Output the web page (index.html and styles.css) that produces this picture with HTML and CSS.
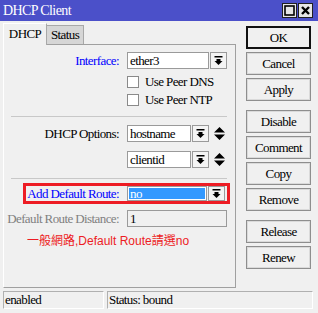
FILE: index.html
```html
<!DOCTYPE html>
<html lang="zh-TW">
<head>
    <meta charset="UTF-8">
    <title>DHCP Client</title>
    <link rel="stylesheet" href="styles.css">
</head>
<body>
    <div class="window">
        <div class="titlebar">
            <span class="title">DHCP Client</span>
            <div class="title-btns">
                <span class="tbtn">
                    <svg width="11" height="11" viewBox="0 0 11 11"><rect x="1" y="1" width="9" height="9" fill="none" stroke="#000" stroke-width="1.6"/></svg>
                </span>
                <span class="tbtn">
                    <svg width="11" height="11" viewBox="0 0 11 11"><path d="M2 2 L9 9 M9 2 L2 9" stroke="#000" stroke-width="2.4"/></svg>
                </span>
            </div>
        </div>

        <div class="main">
            <div class="left">
                <div class="tabs">
                    <div class="tab active">DHCP</div>
                    <div class="tab">Status</div>
                </div>
                <div class="panel">
                    <div class="row row-iface">
                        <label class="lbl blue">Interface:</label>
                        <div class="field w-iface">ether3</div>
                        <span class="drop"><svg width="9" height="9" viewBox="0 0 9 9"><rect x="0.5" y="0" width="8" height="1.5" fill="#000"/><path d="M2.5 3 H6.5 V5 H8.5 L4.5 9 L0.5 5 H2.5 Z" fill="#000"/></svg></span>
                    </div>
                    <div class="row check-row first">
                        <span class="check"></span><span class="ctext">Use Peer DNS</span>
                    </div>
                    <div class="row check-row">
                        <span class="check"></span><span class="ctext">Use Peer NTP</span>
                    </div>

                    <div class="sep"></div>

                    <div class="row row-opt1">
                        <label class="lbl">DHCP Options:</label>
                        <div class="field w-opt">hostname</div>
                        <span class="drop"><svg width="9" height="9" viewBox="0 0 9 9"><rect x="0.5" y="0" width="8" height="1.5" fill="#000"/><path d="M2.5 3 H6.5 V5 H8.5 L4.5 9 L0.5 5 H2.5 Z" fill="#000"/></svg></span>
                        <span class="updown"><svg width="11" height="13" viewBox="0 0 11 13"><path d="M5.5 0 L11 5.5 H0 Z M0 7.5 H11 L5.5 13 Z" fill="#000"/></svg></span>
                    </div>
                    <div class="row row-opt2">
                        <label class="lbl"></label>
                        <div class="field w-opt">clientid</div>
                        <span class="drop"><svg width="9" height="9" viewBox="0 0 9 9"><rect x="0.5" y="0" width="8" height="1.5" fill="#000"/><path d="M2.5 3 H6.5 V5 H8.5 L4.5 9 L0.5 5 H2.5 Z" fill="#000"/></svg></span>
                        <span class="updown"><svg width="11" height="13" viewBox="0 0 11 13"><path d="M5.5 0 L11 5.5 H0 Z M0 7.5 H11 L5.5 13 Z" fill="#000"/></svg></span>
                    </div>

                    <div class="sep sep2"></div>

                    <div class="row highlight">
                        <label class="lbl blue">Add Default Route:</label>
                        <div class="field selected"><span class="sel">no</span></div>
                        <span class="drop"><svg width="9" height="9" viewBox="0 0 9 9"><rect x="0.5" y="0" width="8" height="1.5" fill="#000"/><path d="M2.5 3 H6.5 V5 H8.5 L4.5 9 L0.5 5 H2.5 Z" fill="#000"/></svg></span>
                    </div>

                    <div class="row row-dist">
                        <label class="lbl gray">Default Route Distance:</label>
                        <div class="field disabled w-dist">1</div>
                    </div>

                    <p class="note">一般網路,Default Route請選no</p>
                </div>
            </div>

            <div class="buttons">
                <div class="btn ok">OK</div>
                <div class="btn">Cancel</div>
                <div class="btn">Apply</div>
                <div class="btn gap">Disable</div>
                <div class="btn">Comment</div>
                <div class="btn">Copy</div>
                <div class="btn">Remove</div>
                <div class="btn gap">Release</div>
                <div class="btn">Renew</div>
            </div>
        </div>

        <div class="statusbar">
            <div class="sfield s1">enabled</div>
            <div class="sfield s2">Status: bound</div>
        </div>
    </div>
</body>
</html>
```

FILE: styles.css
```css
* {
    margin: 0;
    padding: 0;
    box-sizing: border-box;
}

body {
    font-family: 'Liberation Serif', 'Noto Sans CJK TC', serif;
    font-size: 13px;
    letter-spacing: -0.6px;
    color: #000;
    background-color: #f0f0f0;
}

.window {
    width: 318px;
    height: 313px;
    background-color: #f0f0f0;
}

/* title bar */
.titlebar {
    height: 21px;
    background-color: #4b50c9;
    display: flex;
    align-items: center;
    justify-content: space-between;
    padding: 0 5px 0 3px;
}

.title {
    color: #fff;
    font-size: 14px;
}

.title-btns {
    display: flex;
    gap: 1px;
}

.tbtn {
    width: 15px;
    height: 15px;
    background-color: #e6e6e6;
    border: 1px solid #202020;
    display: flex;
    align-items: center;
    justify-content: center;
}

/* body */
.main {
    display: flex;
    height: 270px;
    padding-left: 3px;
}

.left {
    width: 233px;
    padding-top: 2px;
    display: flex;
    flex-direction: column;
}

.tabs {
    display: flex;
    align-items: flex-end;
    height: 21px;
}

.tab {
    height: 19px;
    width: 37px;
    background-color: #d6d6d6;
    border: 1px solid #a8a8a8;
    border-left: none;
    border-bottom: none;
    text-align: center;
    line-height: 18px;
}

.tab.active {
    width: 44px;
    height: 22px;
    margin-bottom: -1px;
    background-color: #f0f0f0;
    border-left: 1px solid #fff;
    border-top: 1px solid #fff;
    border-right: 1px solid #a8a8a8;
    line-height: 20px;
    position: relative;
    z-index: 1;
}

.panel {
    height: 244px;
    border: 1px solid #a0a0a0;
    border-left-color: #fff;
}

.row {
    display: flex;
    align-items: center;
    height: 17px;
}

.row-iface { margin-top: 7px; }
.row-opt1 { margin-top: 8px; }
.row-opt2 { margin-top: 9px; }
.row-dist { margin-top: 6px; }

.lbl {
    width: 115px;
    margin-right: 8px;
    text-align: right;
    white-space: nowrap;
}

.blue { color: #0000ff; }
.gray { color: #808080; }

.field {
    height: 17px;
    background-color: #fff;
    border: 1px solid #9a9a9a;
    padding-left: 2px;
    line-height: 15px;
}

.w-iface { width: 82px; }
.w-opt { width: 64px; }
.w-dist { width: 100px; }

.field.disabled {
    background-color: #f0f0f0;
}

.drop {
    width: 17px;
    height: 17px;
    margin-left: 1px;
    border: 1px solid #9a9a9a;
    background-color: #f4f4f4;
    display: flex;
    align-items: center;
    justify-content: center;
}

.updown {
    margin-left: 5px;
    display: flex;
}

.check-row {
    height: 18px;
    padding-left: 123px;
}

.check-row.first { margin-top: 4px; }

.check {
    width: 12px;
    height: 12px;
    background-color: #fff;
    border: 1px solid #8a8a8a;
    margin-right: 6px;
}

.sep {
    height: 1px;
    background-color: #c8c8c8;
    margin: 7px 8px 0 7px;
}

.sep2 { margin-top: 10px; }

/* annotated row */
.highlight {
    height: 21px;
    width: 207px;
    margin: 4px 0 0 19px;
    border: 3px solid #ed1c24;
}

.highlight .lbl {
    width: 93px;
}

.highlight .field {
    width: 80px;
    height: 15px;
    padding: 1px;
}

.highlight .drop {
    height: 15px;
}

.sel {
    display: block;
    height: 100%;
    background-color: #3399ff;
    color: #fff;
    line-height: 12px;
    padding-left: 1px;
}

.note {
    margin: 7px 0 0 23px;
    color: #ed1c24;
    font-family: 'Liberation Sans', 'Noto Sans CJK TC', sans-serif;
    font-size: 12px;
    letter-spacing: 0;
    line-height: 14px;
}

/* right column buttons */
.buttons {
    margin-left: 10px;
    padding-top: 5px;
    display: flex;
    flex-direction: column;
    gap: 3px;
}

.btn {
    width: 65px;
    height: 23px;
    border: 1px solid #8e8e8e;
    box-shadow: inset 0 0 0 1px #dadada;
    background-color: #f0f0f0;
    text-align: center;
    line-height: 21px;
}

.btn.ok {
    border: 2px solid #111;
    box-shadow: none;
    line-height: 19px;
}

.btn.gap { margin-top: 6px; }

/* status bar */
.statusbar {
    display: flex;
    gap: 3px;
    padding-left: 3px;
    height: 18px;
}

.sfield {
    border: 1px solid #b0b0b0;
    border-right-color: #fff;
    border-bottom-color: #fff;
    line-height: 16px;
    padding-left: 1px;
}

.s1 { width: 101px; }
.s2 { width: 206px; }
```
